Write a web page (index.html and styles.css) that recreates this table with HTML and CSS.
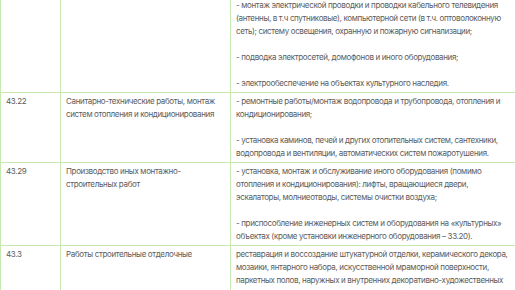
FILE: index.html
```html
<!DOCTYPE html>
<html lang="ru">
<head>
<meta charset="utf-8">
<link rel="stylesheet" href="styles.css">
</head>
<body>
<table class="okved">
  <colgroup>
    <col class="c-code">
    <col class="c-name">
    <col class="c-desc">
  </colgroup>
  <tr>
    <td></td>
    <td></td>
    <td>
      <p>- монтаж электрической проводки и проводки кабельного телевидения (антенны, в т.ч спутниковые), компьютерной сети (в т.ч. оптоволоконную сеть); систему освещения, охранную и пожарную сигнализации;</p>
      <p>- подводка электросетей, домофонов и иного оборудования;</p>
      <p>- электрообеспечение на объектах культурного наследия.</p>
    </td>
  </tr>
  <tr>
    <td>43.22</td>
    <td>Санитарно-технические работы, монтаж систем отопления и кондиционирования</td>
    <td>
      <p>- ремонтные работы/монтаж водопровода и трубопровода, отопления и кондиционирования;</p>
      <p>- установка каминов, печей и других отопительных систем, сантехники, водопровода и вентиляции, автоматических систем пожаротушения.</p>
    </td>
  </tr>
  <tr>
    <td>43.29</td>
    <td>Производство иных монтажно-строительных работ</td>
    <td>
      <p>- установка, монтаж и обслуживание иного оборудования (помимо отопления и кондиционирования): лифты, вращающиеся двери, эскалаторы, молниеотводы, системы очистки воздуха;</p>
      <p>- приспособление инженерных систем и оборудования на «культурных» объектах (кроме установки инженерного оборудования – 33.20).</p>
    </td>
  </tr>
  <tr>
    <td>43.3</td>
    <td>Работы строительные отделочные</td>
    <td>
      <p>реставрация и воссоздание штукатурной отделки, керамического декора, мозаики, янтарного набора, искусственной мраморной поверхности, паркетных полов, наружных и внутренних декоративно-художественных покрасок, архитектурно-лепного декора на объектах культурного наследия.</p>
    </td>
  </tr>
</table>
</body>
</html>
```

FILE: styles.css
```css
html, body {
  margin: 0;
  padding: 0;
  background: #ffffff;
}
body {
  font-family: Inter, "Noto Sans", sans-serif;
  font-size: 8px;
  line-height: 13px;
  letter-spacing: -0.35px;
  color: #5c5c5c;
}
.okved {
  border-collapse: collapse;
  width: 515px;
  margin-top: -4px;
  table-layout: fixed;
}
.c-code { width: 60px; }
.c-name { width: 170px; }
.c-desc { width: 285px; }
.okved td {
  border: 1px solid #c6e9b1;
  padding: 2px 5px 2px 5px;
  vertical-align: top;
}
.okved p {
  margin: 0 0 13px 0;
}
.okved p:last-child {
  margin-bottom: 0;
}
```
